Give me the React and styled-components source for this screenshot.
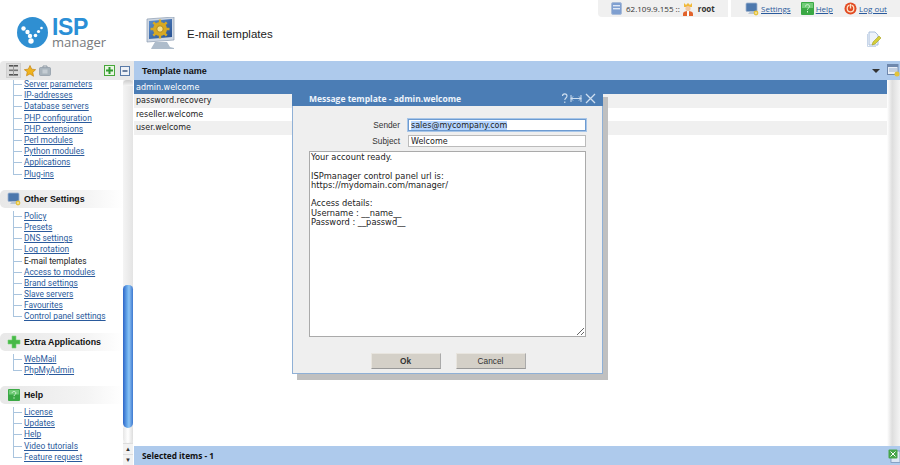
import React, { useEffect, useRef } from 'react';
import styled, { createGlobalStyle } from 'styled-components';

const Global = createGlobalStyle`
  html, body { margin: 0; padding: 0; background: #fff; }
  body { font-family: "Liberation Sans", sans-serif; color: #222; }
  * { box-sizing: border-box; }
`;

const Page = styled.div`
  width: 900px; height: 465px; overflow: hidden; display: flex; flex-direction: column; background: #fff;
`;
const TopBar = styled.div`
  height: 17px; display: flex; justify-content: flex-end; gap: 3px; flex: none;
`;
const TopPanel = styled.div`
  width: ${p => p.$w}px; background: #f0f0f0; display: flex; align-items: center;
  padding-left: ${p => p.$pad}px; font: 500 8px "Open Sans", sans-serif; color: #333;
  border-bottom-left-radius: ${p => p.$round ? 4 : 0}px;
`;
const TopText = styled.span`
  margin-left: 4px; margin-right: ${p => p.$mr || 0}px; white-space: nowrap;
  font-weight: ${p => p.$bold ? 700 : 500};
`;
const TopLink = styled.a`
  margin-left: 2px; margin-right: ${p => p.$mr || 0}px; color: #2a5a9c; text-decoration: underline; white-space: nowrap;
`;
const Header = styled.div`
  height: 44px; flex: none; display: flex; align-items: flex-start; padding: 0 18px 0 17px;
`;
const Logo = styled.div`
  display: flex; align-items: flex-start; width: 128px; gap: 4px; flex: none;
`;
const LogoWords = styled.div`
  display: flex; flex-direction: column; padding-top: 2px;
`;
const LogoIsp = styled.span`
  font: 700 23px/16px "Liberation Sans", sans-serif; color: #2b8fd6; letter-spacing: -.4px;
`;
const LogoManager = styled.span`
  font: 400 13px/15px "Open Sans", sans-serif; color: #77797c;
`;
const PageTitle = styled.h1`
  margin: 10px 0 0 11px; font: 400 11.5px/14px "Liberation Sans", sans-serif; color: #222; flex: 1;
`;
const NoteSlot = styled.span`
  margin-top: 14px; display: flex;
`;
const Body = styled.div`
  flex: 1; min-height: 0; display: flex;
`;
const Sidebar = styled.aside`
  width: 134px; flex: none; display: flex; flex-direction: column; min-height: 0;
`;
const SideTools = styled.div`
  height: 19px; flex: none; background: #e9e9e9; border-top-left-radius: 4px; display: flex; align-items: center;
  padding: 0 2px 0 6px;
`;
const ToolBtn = styled.span`
  width: 15px; height: 15px; display: flex; align-items: center; justify-content: center; margin-right: ${p => p.$mr || 0}px;
  background: ${p => p.$active ? '#dcdcdc' : 'transparent'};
  border: 1px solid ${p => p.$active ? '#cfcfcf' : 'transparent'};
`;
const Grow = styled.span` flex: 1; `;
const SideMain = styled.div`
  flex: 1; min-height: 0; display: flex;
`;
const SideScroll = styled.div`
  width: 123px; overflow: hidden; display: flex; flex-direction: column; gap: 10px;
`;
const Section = styled.section`
  display: flex; flex-direction: column; flex: none;
  &:first-child { margin-top: -1px; }
`;
const SectionHead = styled.div`
  height: 18px; margin-bottom: 3px; display: flex; align-items: center; padding-left: 6px; gap: 3px;
  background: linear-gradient(90deg, #e8e8e8, #f4f4f4 70%, #fff);
  border-radius: 5px 0 0 5px; font: 700 8.8px "Liberation Sans", sans-serif; color: #111;
`;
const HeadIcon = styled.span` width: 15px; height: 15px; display: flex; align-items: center; justify-content: center; `;
const Tree = styled.ul`
  list-style: none; margin: 0 0 0 13px; padding: 0;
`;
const TreeItem = styled.li`
  height: 11.2px; display: flex; align-items: center; font: 400 8.4px/9px Roboto, sans-serif; white-space: nowrap;
  color: ${p => p.$current ? '#222' : '#2a5a9c'};
  text-decoration: ${p => p.$current ? 'none' : 'underline'};
  background: linear-gradient(#a9c4de, #a9c4de) 0 0 / 1px 100% no-repeat;
  &:last-child { background-size: 1px 50%; }
  &::before {
    content: ''; width: 9px; height: 1px; background: #a9c4de; margin-right: 2px; flex: none;
  }
`;
const ScrollTrack = styled.div`
  width: 10px; flex: none; background: linear-gradient(90deg, #f4f4f4, #e4e4e4); display: flex; flex-direction: column;
`;
const ScrollTop = styled.div`
  height: 6px; flex: none; background: linear-gradient(180deg, #ccc, #f4f4f4); border-radius: 4px 4px 0 0;
`;
const ScrollGap = styled.div` height: 199px; flex: none; `;
const ScrollThumb = styled.div`
  height: 143px; flex: none; border-radius: 5px 5px 6px 6px;
  background: linear-gradient(90deg, #2d66c8, #6fb0ee 45%, #8ec4f4 60%, #3d78d0);
`;
const ScrollCap = styled.div`
  height: 15px; flex: none; border-radius: 0 0 5px 5px; background: linear-gradient(90deg, #e6e6e6, #fff 50%, #ddd);
`;
const ScrollArrow = styled.div`
  height: 11px; flex: none; display: flex; align-items: center; justify-content: center; font-size: 6px; line-height: 1; color: #333;
  background: #f2f2f2; border-top: 1px solid #ddd;
`;
const Main = styled.main`
  flex: 1; min-width: 0; display: flex; flex-direction: column; position: relative;
`;
const TableHead = styled.div`
  height: 19px; flex: none; background: #aecaec; display: flex; align-items: center; padding: 0 0 0 8px;
  font: 700 9px "Liberation Sans", sans-serif; color: #111;
`;
const HeadTitle = styled.span` flex: 1; `;
const Caret = styled.span`
  width: 0; height: 0; border: 4px solid transparent; border-top: 4px solid #333; border-bottom: 0; margin-right: 7px;
`;
const TableBody = styled.div`
  flex: 1; min-height: 0; display: flex;
`;
const Rows = styled.div`
  flex: 1; display: flex; flex-direction: column;
`;
const Row = styled.div`
  height: ${p => p.$h}px; display: flex; align-items: center; padding-left: 2px;
  font: 400 8px "DejaVu Sans", sans-serif; color: ${p => p.$selected ? '#fff' : '#222'};
  background: ${p => p.$selected ? '#4b7db5' : p.$alt ? '#f0f0f0' : '#fff'};
`;
const RightTrack = styled.div`
  width: 13px; flex: none; background: linear-gradient(90deg, #fff, #dedede 40%, #f4f4f4);
`;
const Footer = styled.div`
  height: 19px; flex: none; background: #aecaec; display: flex; align-items: center; padding: 0 0 0 8px;
  justify-content: space-between; font: 700 8.3px "Open Sans", sans-serif; color: #111;
`;
const Dialog = styled.div`
  position: absolute; left: 158px; top: 30px; width: 311px; height: 283px;
  background: #efefef; border: 1px solid #8fb0d6; border-top: 0;
  box-shadow: 5px 6px 0 #c0c0c0; display: flex; flex-direction: column;
`;
const DialogTitle = styled.div`
  height: 15px; flex: none; margin: 0 -1px; background: #4b7db5; display: flex; align-items: center;
  padding: 0 6px 0 17px; color: #fff; font: 700 8.5px "Open Sans", sans-serif;
`;
const DialogName = styled.span` flex: 1; color: #eef4fb; `;
const DialogForm = styled.div`
  flex: 1; display: grid; grid-template-columns: 91px 178px; column-gap: 8px; row-gap: 4px;
  padding: 13px 0 0 16px; grid-template-rows: 12px 12px 186px auto; align-items: center;
  font: 400 8.3px "Liberation Sans", sans-serif; color: #333;
`;
const Label = styled.label` text-align: right; `;
const Input = styled.input`
  width: 100%; height: 12px; padding: 0 2px; margin: 0; border: 1px solid ${p => p.$focus ? '#6d9bd1' : '#bbb'};
  outline: ${p => p.$focus ? '1px solid #a8c6e8' : 'none'}; background: #fff; color: #222; font: 400 8px "DejaVu Sans", sans-serif;
  &::selection { background: #b5d5ff; color: #222; }
`;
const Text = styled.textarea`
  grid-column: 1 / -1; width: 277px; height: 186px; margin: 0; padding: 1px 1px; border: 1px solid #aaa; background: #fff;
  color: #222; font: 400 8.3px/9.3px "DejaVu Sans", sans-serif; outline: none; overflow: hidden; display: block;
`;
const Buttons = styled.div`
  grid-column: 1 / -1; display: flex; justify-content: center; gap: 15px; width: 278px; margin-top: 7px; height: 16px;
`;
const Btn = styled.button`
  width: 70px; height: 16px; padding: 0; background: #d4d0c8; border: 0; border-bottom: 1px solid #999; border-right: 1px solid #aaa;
  border-top: 1px solid #e8e5df; border-left: 1px solid #e8e5df;
  font: ${p => p.$primary ? 700 : 400} 8.3px "Liberation Sans", sans-serif; color: #333;
`;

const Server = () => <svg width="11" height="13" viewBox="0 0 11 13"><rect x=".5" y=".5" width="10" height="12" rx="1.5" fill="#7f9fd0" stroke="#a9bcd8"/><rect x="2" y="3" width="7" height="1.4" fill="#dfe8f5"/><rect x="2" y="6" width="7" height="1.4" fill="#dfe8f5"/></svg>;
const King = () => <svg width="12" height="14" viewBox="0 0 12 14"><path d="M2 1l2 2 2-2 2 2 2-2v4H2z" fill="#f0b93a"/><circle cx="6" cy="6.5" r="2.6" fill="#f3c9a0"/><path d="M1 14v-2.5C1 10 3 9 6 9s5 1 5 2.5V14z" fill="#e2632c"/><rect x="5" y="9" width="2" height="5" fill="#fff"/></svg>;
const Monitor = ({ s = 14 }) => <svg width={s} height={s} viewBox="0 0 14 14"><rect x="1" y="1" width="11" height="8.5" rx="1" fill="#4d78ad" stroke="#9fb4cf" strokeWidth=".8"/><path d="M3 12h8l-1-2.5H5z" fill="#b9c6d6"/><circle cx="11" cy="11" r="2.4" fill="#e6c33c"/><circle cx="11" cy="11" r=".8" fill="#fff"/></svg>;
const HelpBox = ({ s = 13 }) => <svg width={s} height={s} viewBox="0 0 13 13"><rect width="13" height="13" rx="1" fill="#3aa844"/><rect x="1" y="1" width="11" height="5" fill="#70cb76"/><path d="M4.5 4.5c0-2.5 4-2.5 4 0 0 1.7-2 1.5-2 3.2M6.5 9v1.5" fill="none" stroke="#d8f5da" strokeWidth="1"/></svg>;
const Power = () => <svg width="13" height="13" viewBox="0 0 13 13"><circle cx="6.5" cy="6.5" r="6" fill="#e24a22"/><circle cx="6.5" cy="6.5" r="3.3" fill="none" stroke="#fbe3c8" strokeWidth="1.3"/><rect x="5.7" y="1.8" width="1.6" height="5" fill="#fbe3c8" stroke="#e24a22" strokeWidth=".4"/></svg>;
const TreeIco = () => <svg width="9" height="13" viewBox="0 0 9 13"><rect y="1" width="9" height="1.6" fill="#555"/><rect y="5.5" width="9" height="1.6" fill="#777"/><rect y="10" width="9" height="1.6" fill="#555"/><rect x="4" y="1" width="1" height="10" fill="#999"/></svg>;
const Star = () => <svg width="12" height="12" viewBox="0 0 24 24"><path d="M12 1l3.4 7.3 7.9 1-5.8 5.4 1.5 7.9L12 17.8l-7 3.8 1.5-7.9L.7 9.3l7.9-1z" fill="#f0b31c" stroke="#c68512" strokeWidth="1.4"/></svg>;
const Briefcase = () => <svg width="12" height="11" viewBox="0 0 12 11"><rect x=".5" y="2.5" width="11" height="8" rx="1" fill="#a9b4bd" stroke="#8b98a3" strokeWidth=".7"/><path d="M4 2.5V1h4v1.5" fill="none" stroke="#8b98a3"/><rect x="3.5" y="4.5" width="5" height="4" fill="#c5cdd4"/></svg>;
const PlusBox = () => <svg width="11" height="11" viewBox="0 0 11 11"><rect x=".5" y=".5" width="10" height="10" fill="#eaf5e4" stroke="#47a83a"/><path d="M5.5 2v7M2 5.5h7" stroke="#2f9a2c" strokeWidth="2"/></svg>;
const MinusBox = () => <svg width="10" height="10" viewBox="0 0 10 10"><rect x=".5" y=".5" width="9" height="9" fill="#eef1f6" stroke="#5a7ba8"/><path d="M2.5 5h5" stroke="#33507c" strokeWidth="1.4"/></svg>;
const GreenPlus = () => <svg width="14" height="14" viewBox="0 0 14 14"><path d="M5 1h4v4h4v4H9v4H5V9H1V5h4z" fill="#48b948" stroke="#7ad47a" strokeWidth=".6"/></svg>;
const NoteEdit = () => <svg width="16" height="17" viewBox="0 0 16 17"><path d="M3 1h6l3 3v10H3z" fill="#eef3fb" stroke="#a9bfdc"/><path d="M1.5 3v12.5H10" fill="none" stroke="#c8d6e9"/><path d="M6 14l1-3 6-6 2 2-6 6z" fill="#d6cf3a" stroke="#a6a01f" strokeWidth=".6"/></svg>;
const Excel = () => <svg width="12" height="14" viewBox="0 0 12 14"><rect x="3" y="2" width="9" height="11.5" fill="#dce7f5" stroke="#6d8bb2" strokeWidth=".7"/><rect x=".5" y=".5" width="9" height="9" rx="1" fill="#47a54a"/><path d="M2.5 2.5l5 5m0-5l-5 5" stroke="#fff"/></svg>;
const GridGear = () => <svg width="13" height="13" viewBox="0 0 13 13"><rect x=".5" y=".5" width="10.5" height="10" fill="#e8eef7" stroke="#6f88ad"/><rect x=".5" y=".5" width="10.5" height="2.5" fill="#6f88ad"/><path d="M2 5h8M2 7h8" stroke="#9db0ca"/><circle cx="10" cy="10" r="2.5" fill="#e3c33a"/></svg>;
const BigMonitor = () => (
  <svg width="31" height="33" viewBox="0 0 31 33">
    <defs><linearGradient id="scr" x1="0" y1="0" x2="1" y2="1"><stop offset="0" stopColor="#5d8fce"/><stop offset="1" stopColor="#264f8f"/></linearGradient></defs>
    <path d="M2 2l27-2v23L2 25z" fill="#cfd8e4" stroke="#8b9bb0" strokeWidth=".7"/>
    <path d="M4 4l23-2v18L4 22z" fill="url(#scr)"/>
    <path d="M10 25h12l3 5 4 1v1H6l1-2z" fill="#aebccb"/>
    <g fill="#d8a923">
      <circle cx="15" cy="12" r="7"/>
      <g stroke="#d8a923" strokeWidth="2.4"><path d="M15 2.5v19M5.5 12h19M8.3 5.3l13.4 13.4M21.7 5.3L8.3 18.7"/></g>
    </g>
    <circle cx="15" cy="12" r="3.2" fill="#f7e08a" stroke="#a67b12" strokeWidth=".8"/>
  </svg>
);
const LogoMark = () => (
  <svg width="31" height="31" viewBox="0 0 31 31">
    <circle cx="15.5" cy="15.5" r="15.5" fill="#2f8fd2"/>
    <g fill="#fff">
      <circle cx="6.5" cy="11.5" r="2.2"/><circle cx="10.5" cy="15" r="2.2"/><circle cx="13" cy="19" r="2.2"/>
      <circle cx="14" cy="24" r="2.7"/><circle cx="18.5" cy="18.5" r="1.8"/><circle cx="21.5" cy="14.5" r="1.6"/><circle cx="24.5" cy="11" r="1.3"/>
    </g>
  </svg>
);
const DlgIcons = () => (
  <svg width="37" height="11" viewBox="0 0 37 11" fill="none" stroke="#cfdff0">
    <path d="M2.5 3c0-2.8 4.5-2.8 4.5 0 0 2-2.2 2-2.2 4M4.8 8.5v1.5" strokeWidth="1.1"/>
    <path d="M11 2v7M21 2v7M11 5.5h10M13 3.5l-2 2 2 2M19 3.5l2 2-2 2" strokeWidth="1"/>
    <path d="M26 1l9 9M35 1l-9 9" strokeWidth="1.3"/>
  </svg>
);

const groups = [
  { items: ['Server parameters', 'IP-addresses', 'Database servers', 'PHP configuration', 'PHP extensions', 'Perl modules', 'Python modules', 'Applications', 'Plug-ins'] },
  { title: 'Other Settings', icon: <Monitor />, items: ['Policy', 'Presets', 'DNS settings', 'Log rotation', 'E-mail templates', 'Access to modules', 'Brand settings', 'Slave servers', 'Favourites', 'Control panel settings'] },
  { title: 'Extra Applications', icon: <GreenPlus />, items: ['WebMail', 'PhpMyAdmin'] },
  { title: 'Help', icon: <HelpBox s={12} />, items: ['License', 'Updates', 'Help', 'Video tutorials', 'Feature request'] },
];
const rows = ['admin.welcome', 'password.recovery', 'reseller.welcome', 'user.welcome'];
const body = `Your account ready.

ISPmanager control panel url is:
https://mydomain.com/manager/

Access details:
Username : __name__
Password : __passwd__`;

export default function App() {
  const ref = useRef(null);
  useEffect(() => { ref.current?.focus(); ref.current?.select(); }, []);
  return (
    <Page>
      <Global />
      <TopBar>
        <TopPanel $w={130} $pad={13} $round>
          <Server /><TopText $mr={2}>62.109.9.155 ::</TopText><King /><TopText $bold>root</TopText>
        </TopPanel>
        <TopPanel $w={169} $pad={14}>
          <Monitor /><TopLink $mr={10}>Settings</TopLink>
          <HelpBox /><TopLink $mr={11}>Help</TopLink>
          <Power /><TopLink>Log out</TopLink>
        </TopPanel>
      </TopBar>
      <Header>
        <Logo>
          <LogoMark />
          <LogoWords>
            <LogoIsp>ISP</LogoIsp>
            <LogoManager>manager</LogoManager>
          </LogoWords>
        </Logo>
        <BigMonitor />
        <PageTitle>E-mail templates</PageTitle>
        <NoteSlot><NoteEdit /></NoteSlot>
      </Header>
      <Body>
        <Sidebar>
          <SideTools>
            <ToolBtn $active $mr={1}><TreeIco /></ToolBtn>
            <ToolBtn><Star /></ToolBtn>
            <ToolBtn><Briefcase /></ToolBtn>
            <Grow />
            <ToolBtn><PlusBox /></ToolBtn>
            <ToolBtn><MinusBox /></ToolBtn>
          </SideTools>
          <SideMain>
            <SideScroll>
              {groups.map((g, i) => (
                <Section key={i}>
                  {g.title && <SectionHead><HeadIcon>{g.icon}</HeadIcon>{g.title}</SectionHead>}
                  <Tree>
                    {g.items.map(t => <TreeItem key={t} $current={t === 'E-mail templates'}>{t}</TreeItem>)}
                  </Tree>
                </Section>
              ))}
            </SideScroll>
            <ScrollTrack>
              <ScrollTop />
              <ScrollGap />
              <ScrollThumb />
              <ScrollCap />
              <ScrollArrow>▲</ScrollArrow>
              <ScrollArrow>▼</ScrollArrow>
            </ScrollTrack>
          </SideMain>
        </Sidebar>
        <Main>
          <TableHead>
            <HeadTitle>Template name</HeadTitle>
            <Caret />
            <GridGear />
          </TableHead>
          <TableBody>
            <Rows>
              {rows.map((r, i) => <Row key={r} $selected={i === 0} $alt={i % 2 === 1} $h={i === 0 ? 14 : 13.5}>{r}</Row>)}
            </Rows>
            <RightTrack />
          </TableBody>
          <Footer>Selected items - 1<Excel /></Footer>
          <Dialog>
            <DialogTitle><DialogName>Message template - admin.welcome</DialogName><DlgIcons /></DialogTitle>
            <DialogForm>
              <Label>Sender</Label>
              <Input ref={ref} $focus defaultValue="sales@mycompany.com" />
              <Label>Subject</Label>
              <Input defaultValue="Welcome" />
              <Text defaultValue={body} />
              <Buttons>
                <Btn $primary>Ok</Btn>
                <Btn>Cancel</Btn>
              </Buttons>
            </DialogForm>
          </Dialog>
        </Main>
      </Body>
    </Page>
  );
}
